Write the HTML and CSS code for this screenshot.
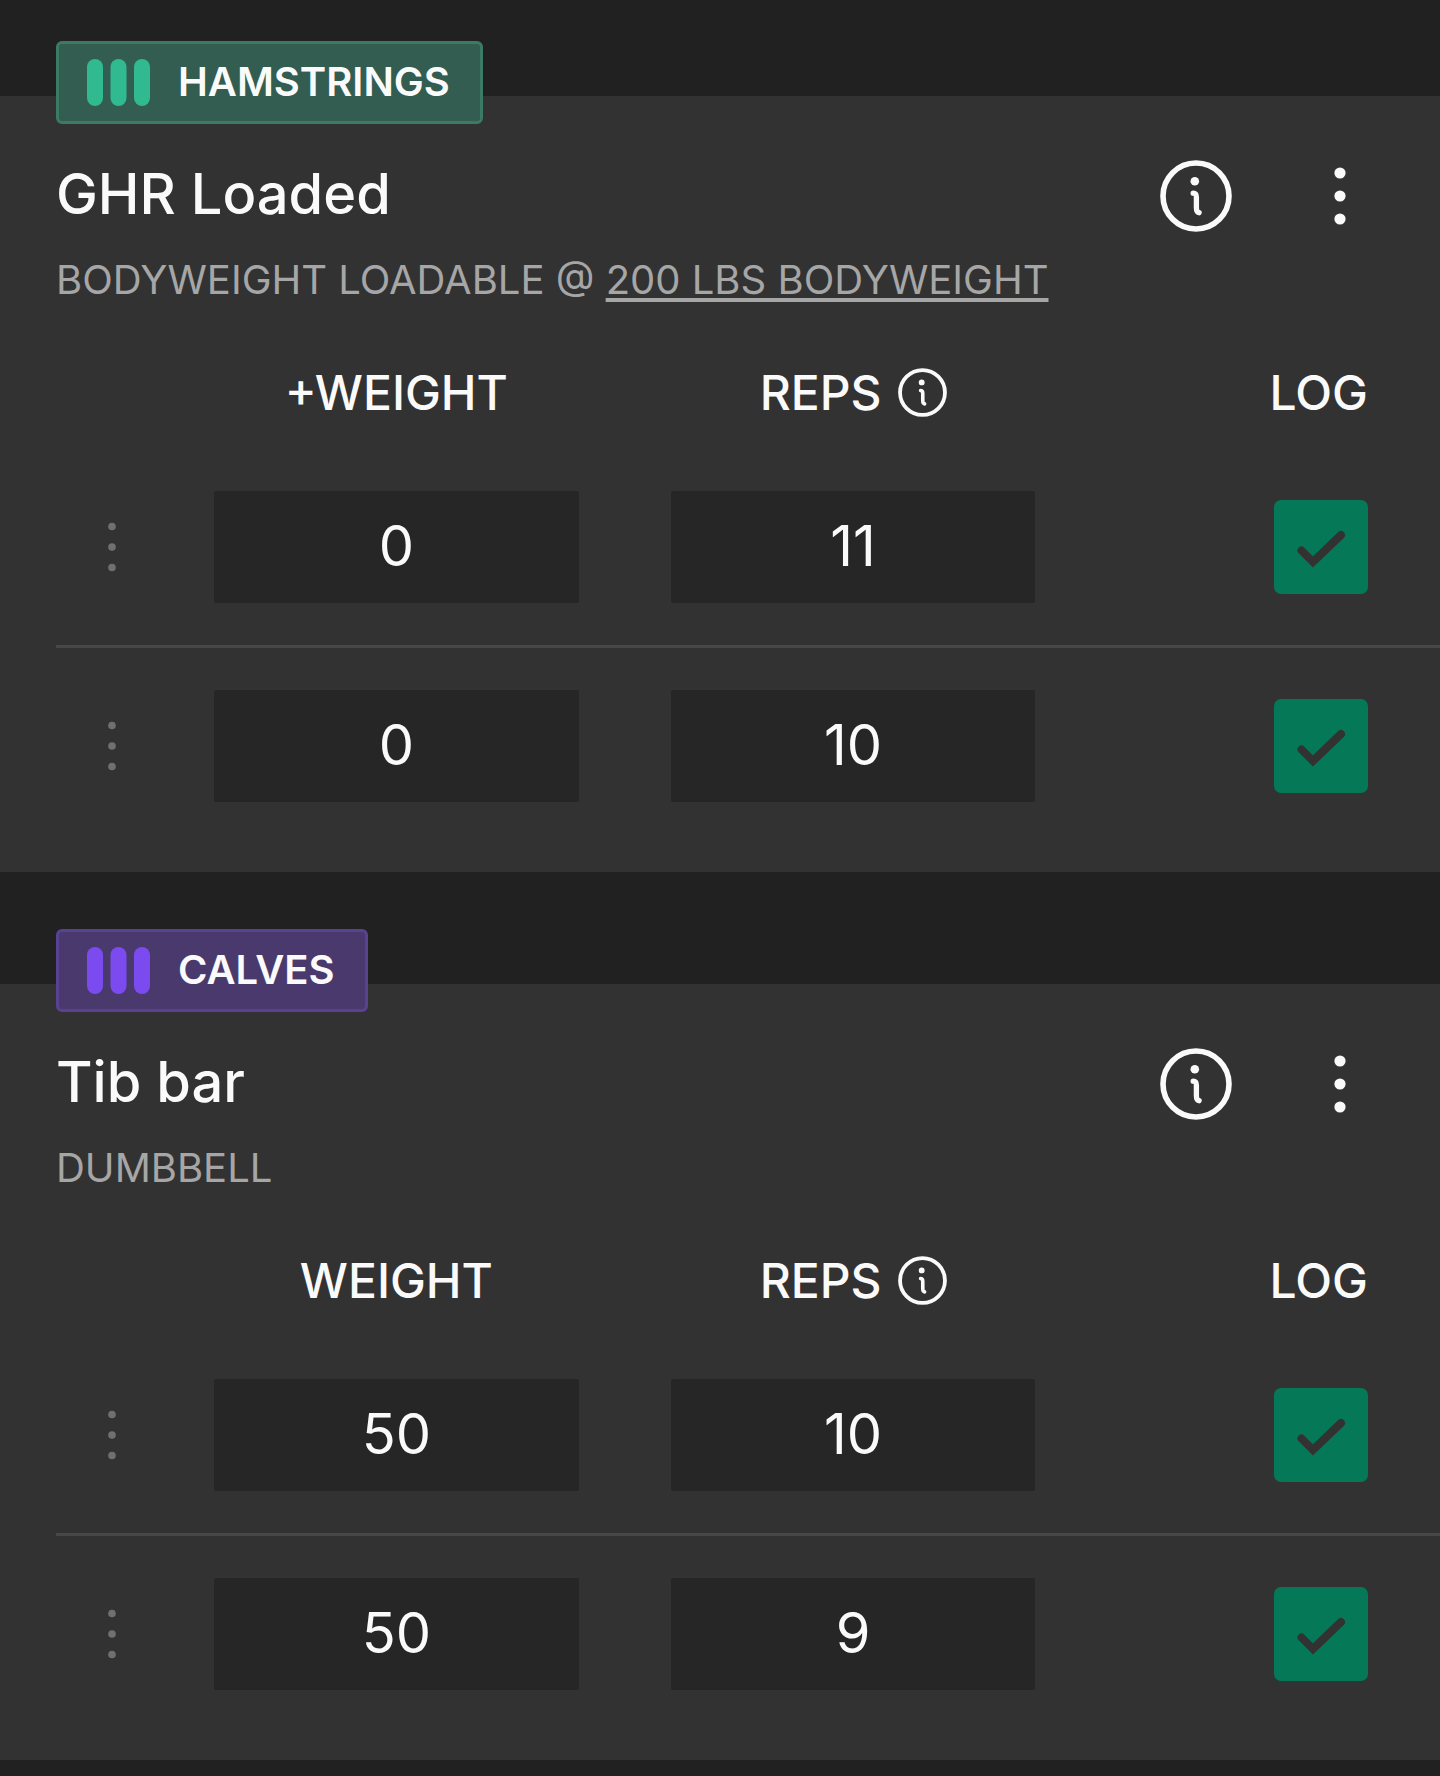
FILE: index.html
```html
<!DOCTYPE html>
<html lang="en">
<head>
  <meta charset="UTF-8" />
  <title>Workout Log</title>
  <meta name="viewport" content="width=device-width, initial-scale=1.0" />
  <link rel="stylesheet" href="styles.css">
</head>
<body>
  <!-- shared icons -->
  <svg class="sprite" aria-hidden="true">
    <symbol id="icon-info" viewBox="0 0 72 72">
      <circle cx="36" cy="36" r="33" fill="none" stroke="currentColor" stroke-width="5.6" />
      <circle cx="34.8" cy="21.2" r="4.3" fill="currentColor" />
      <path d="M33.2 33.2c2.6 0 3.2 1.5 3.2 4v10.5c0 3 .7 4.6 2.7 5" fill="none" stroke="currentColor" stroke-width="5.3" stroke-linecap="round" />
    </symbol>
    <symbol id="icon-dots" viewBox="0 0 12 60">
      <circle cx="6" cy="7" r="5.6" />
      <circle cx="6" cy="30" r="5.6" />
      <circle cx="6" cy="53" r="5.6" />
    </symbol>
    <symbol id="icon-handle" viewBox="0 0 8 50">
      <circle cx="4" cy="4.5" r="3.8" />
      <circle cx="4" cy="25" r="3.8" />
      <circle cx="4" cy="45.5" r="3.8" />
    </symbol>
    <symbol id="icon-bars" viewBox="0 0 63 47">
      <rect width="16" height="47" rx="8" />
      <rect x="23.5" width="16" height="47" rx="8" />
      <rect x="47" width="16" height="47" rx="8" />
    </symbol>
    <symbol id="icon-check" viewBox="0 0 94 94">
      <path d="M27.5 50.5L39 62L67 35" fill="none" stroke="currentColor" stroke-width="8" stroke-linecap="round" />
    </symbol>
  </svg>

  <main>
    <section class="exercise">
      <div class="badge hamstrings">
        <svg class="bars"><use href="#icon-bars" /></svg>
        <span>HAMSTRINGS</span>
      </div>
      <div class="title-row">
        <h2>GHR Loaded</h2>
        <button class="info" aria-label="Exercise info"><svg><use href="#icon-info" /></svg></button>
        <button class="menu" aria-label="Exercise menu"><svg><use href="#icon-dots" /></svg></button>
      </div>
      <p class="equipment">BODYWEIGHT LOADABLE @ <a href="#">200 LBS BODYWEIGHT</a></p>
      <table>
        <thead>
          <tr>
            <th class="col-handle"></th>
            <th class="col-value">+WEIGHT</th>
            <th class="col-value"><div class="reps">REPS <button class="info-small" aria-label="Reps info"><svg><use href="#icon-info" /></svg></button></div></th>
            <th class="col-log">LOG</th>
          </tr>
        </thead>
        <tbody>
          <tr>
            <td class="col-handle"><button class="handle" aria-label="Set menu"><svg><use href="#icon-handle" /></svg></button></td>
            <td><input class="value" type="text" inputmode="decimal" aria-label="Added weight" value="0"></td>
            <td><input class="value" type="text" inputmode="numeric" aria-label="Reps" value="11"></td>
            <td class="col-log"><label class="check"><input type="checkbox" aria-label="Log set" checked><svg><use href="#icon-check" /></svg></label></td>
          </tr>
          <tr>
            <td class="col-handle"><button class="handle" aria-label="Set menu"><svg><use href="#icon-handle" /></svg></button></td>
            <td><input class="value" type="text" inputmode="decimal" aria-label="Added weight" value="0"></td>
            <td><input class="value" type="text" inputmode="numeric" aria-label="Reps" value="10"></td>
            <td class="col-log"><label class="check"><input type="checkbox" aria-label="Log set" checked><svg><use href="#icon-check" /></svg></label></td>
          </tr>
        </tbody>
      </table>
    </section>

    <section class="exercise">
      <div class="badge calves">
        <svg class="bars"><use href="#icon-bars" /></svg>
        <span>CALVES</span>
      </div>
      <div class="title-row">
        <h2>Tib bar</h2>
        <button class="info" aria-label="Exercise info"><svg><use href="#icon-info" /></svg></button>
        <button class="menu" aria-label="Exercise menu"><svg><use href="#icon-dots" /></svg></button>
      </div>
      <p class="equipment">DUMBBELL</p>
      <table>
        <thead>
          <tr>
            <th class="col-handle"></th>
            <th class="col-value">WEIGHT</th>
            <th class="col-value"><div class="reps">REPS <button class="info-small" aria-label="Reps info"><svg><use href="#icon-info" /></svg></button></div></th>
            <th class="col-log">LOG</th>
          </tr>
        </thead>
        <tbody>
          <tr>
            <td class="col-handle"><button class="handle" aria-label="Set menu"><svg><use href="#icon-handle" /></svg></button></td>
            <td><input class="value" type="text" inputmode="decimal" aria-label="Weight" value="50"></td>
            <td><input class="value" type="text" inputmode="numeric" aria-label="Reps" value="10"></td>
            <td class="col-log"><label class="check"><input type="checkbox" aria-label="Log set" checked><svg><use href="#icon-check" /></svg></label></td>
          </tr>
          <tr>
            <td class="col-handle"><button class="handle" aria-label="Set menu"><svg><use href="#icon-handle" /></svg></button></td>
            <td><input class="value" type="text" inputmode="decimal" aria-label="Weight" value="50"></td>
            <td><input class="value" type="text" inputmode="numeric" aria-label="Reps" value="9"></td>
            <td class="col-log"><label class="check"><input type="checkbox" aria-label="Log set" checked><svg><use href="#icon-check" /></svg></label></td>
          </tr>
        </tbody>
      </table>
    </section>
  </main>
</body>
</html>
```

FILE: styles.css
```css
* {
  box-sizing: border-box;
}
body {
  margin: 0;
  background: #212121;
  color: #fafafa;
  font-family: Inter, sans-serif;
}
main {
  display: flex;
  flex-direction: column;
  gap: 112px;
  padding: 96px 0 16px;
}
svg {
  display: block;
  fill: currentColor;
}
.sprite {
  display: none;
}
button {
  padding: 0;
  border: 0;
  background: none;
  color: inherit;
  font: inherit;
  cursor: pointer;
}
.exercise {
  background: #323232;
  padding: 0 0 28px 56px;
}

/* muscle group badge, straddles the top edge of the card */
.badge {
  display: flex;
  align-items: center;
  gap: 28px;
  width: fit-content;
  height: 83px;
  margin-top: -55px;
  padding: 0 30px 0 28px;
  border: 3px solid;
  border-radius: 6px;
  font-size: 40px;
  font-weight: 600;
}
.badge span {
  color: #fafafa;
  line-height: 48px;
  padding-bottom: 2px;
}
.bars {
  width: 63px;
  height: 47px;
}
.hamstrings {
  background: #325d50;
  border-color: #3b7a65;
}
.hamstrings .bars {
  color: #31b990;
}
.calves {
  background: #4a396c;
  border-color: #594292;
}
.calves .bars {
  color: #7c4bf0;
}

.title-row {
  display: flex;
  align-items: center;
  height: 72px;
  margin-top: 36px;
  padding-right: 94px;
}
h2 {
  flex: 1;
  margin: 0;
  font-size: 56px;
  font-weight: 500;
  line-height: 72px;
  padding-bottom: 4px;
}
.info svg {
  width: 72px;
  height: 72px;
}
.menu {
  margin-left: 102px;
}
.menu svg {
  width: 12px;
  height: 60px;
}
.equipment {
  margin: 16px 0 24px;
  color: #a6a6a6;
  font-size: 40px;
  line-height: 64px;
}
.equipment a {
  color: inherit;
  text-decoration-thickness: 4px;
  text-underline-offset: 4px;
}

table {
  width: 100%;
  table-layout: fixed;
  border-collapse: collapse;
}
th, td {
  padding: 0 46px;
}
th {
  height: 113px;
  font-size: 48px;
  font-weight: 500;
}
td {
  padding-top: 42px;
  padding-bottom: 42px;
}
tbody tr + tr td {
  border-top: 3px solid #484848;
}
.col-handle {
  width: 112px;
  padding-left: 0;
  padding-right: 0;
  text-align: center;
}
.col-value {
  width: 33%;
  padding-left: 0;
  padding-right: 0;
}
.col-log {
  padding-left: 0;
  padding-right: 72px;
  text-align: right;
}
.reps {
  display: flex;
  align-items: center;
  justify-content: center;
  gap: 16px;
}
.info-small svg {
  width: 49px;
  height: 49px;
}
.handle {
  color: #707070;
  vertical-align: middle;
}
.handle svg {
  width: 8px;
  height: 50px;
}
.value {
  display: block;
  width: 100%;
  height: 112px;
  padding: 0 0 2px;
  border: 0;
  border-radius: 2px;
  background: #262626;
  color: #fafafa;
  font-family: inherit;
  font-size: 56px;
  text-align: center;
}

/* tick is stacked over the box in the same grid cell */
.check {
  display: inline-grid;
  vertical-align: middle;
  color: #323232;
  cursor: pointer;
}
.check input,
.check svg {
  grid-area: 1 / 1;
  width: 94px;
  height: 94px;
  margin: 0;
}
.check input {
  appearance: none;
  border-radius: 7px;
  background: #262626;
}
.check input:checked {
  background: #057857;
}
.check svg {
  pointer-events: none;
  visibility: hidden;
}
.check input:checked + svg {
  visibility: visible;
}
```
